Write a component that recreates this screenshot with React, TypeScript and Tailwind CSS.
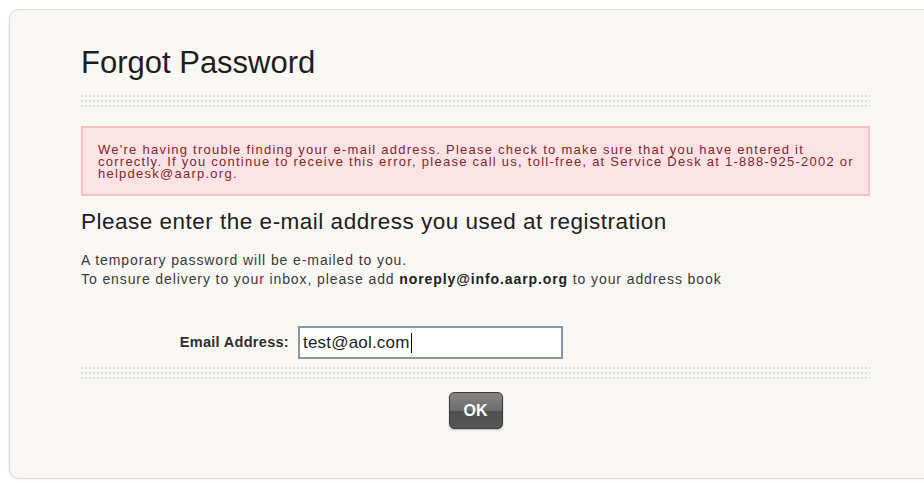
import React from 'react'

// three rows of fine dashes used as a section rule
function DottedRule() {
  return (
    <div className="flex flex-col gap-[3px] py-[1px]">
      <div className="h-[2px] bg-[repeating-linear-gradient(90deg,#dcdcdc_0_2px,transparent_2px_4px)]" />
      <div className="h-[2px] bg-[repeating-linear-gradient(90deg,#dcdcdc_0_2px,transparent_2px_4px)]" />
      <div className="h-[2px] bg-[repeating-linear-gradient(90deg,#dcdcdc_0_2px,transparent_2px_4px)]" />
    </div>
  )
}

export default function App() {
  return (
    <div className="w-[924px] h-[483px] overflow-hidden bg-white font-['Liberation_Sans',Arial,sans-serif]">
      <div className="mt-[9px] ml-[9px] w-[960px] h-[470px] rounded-[10px] border border-[#dddcd5] bg-[#f8f7f4] shadow-[-1px_1px_2px_rgba(0,0,0,0.06)] pl-[71px] pt-[38px]">
        <div className="w-[789px]">
          <h1 className="text-[31px] leading-[30px] text-[#1e1e1e]">Forgot Password</h1>

          <div className="mt-[16px]">
            <DottedRule />
          </div>

          <div className="mt-[18px] h-[70px] whitespace-nowrap border-2 border-[#f6c2c6] bg-[#fbe3e5] px-[15px] pt-[16px] text-[13px] leading-[12px] tracking-[1.25px] text-[#862626]">
            We're having trouble finding your e-mail address. Please check to make sure that you have entered it
            <br />
            correctly. If you continue to receive this error, please call us, toll-free, at Service Desk at 1-888-925-2002 or
            <br />
            helpdesk@aarp.org.
          </div>

          <h2 className="mt-[14px] text-[22.5px] leading-[24px] tracking-[0.5px] text-[#1e1e1e]">
            Please enter the e-mail address you used at registration
          </h2>

          <div className="mt-[17px] text-[14px] leading-[19px] tracking-[0.9px] text-[#3a3a3a]">
            <p>A temporary password will be e-mailed to you.</p>
            <p>
              To ensure delivery to your inbox, please add <b className="text-[#222]">noreply@info.aarp.org</b> to your
              address book
            </p>
          </div>

          <div className="mt-[37px] flex items-center">
            <label className="w-[217px] pr-[9px] text-right text-[14.5px] tracking-[0.3px] font-bold text-[#2e2e2e]">
              Email Address:
            </label>
            <div className="flex h-[33px] w-[265px] items-center border-2 border-[#8795a8] bg-white pl-[3px] text-[17px] tracking-[0.2px] text-[#222]">
              <span>test@aol.com</span>
              <span className="ml-[1px] h-[20px] w-[1.5px] bg-black" />
            </div>
          </div>

          <div className="mt-[7px]">
            <DottedRule />
          </div>

          <div className="mt-[12px] flex justify-center">
            <button className="h-[37px] w-[54px] rounded-[5px] border border-[#3f3f3f] bg-[linear-gradient(180deg,#858585_0%,#6c6c6c_50%,#4f4f4f_52%,#555_100%)] text-[16px] font-bold text-white shadow-[0_1px_2px_rgba(0,0,0,0.25)]">
              OK
            </button>
          </div>
        </div>
      </div>
    </div>
  )
}
